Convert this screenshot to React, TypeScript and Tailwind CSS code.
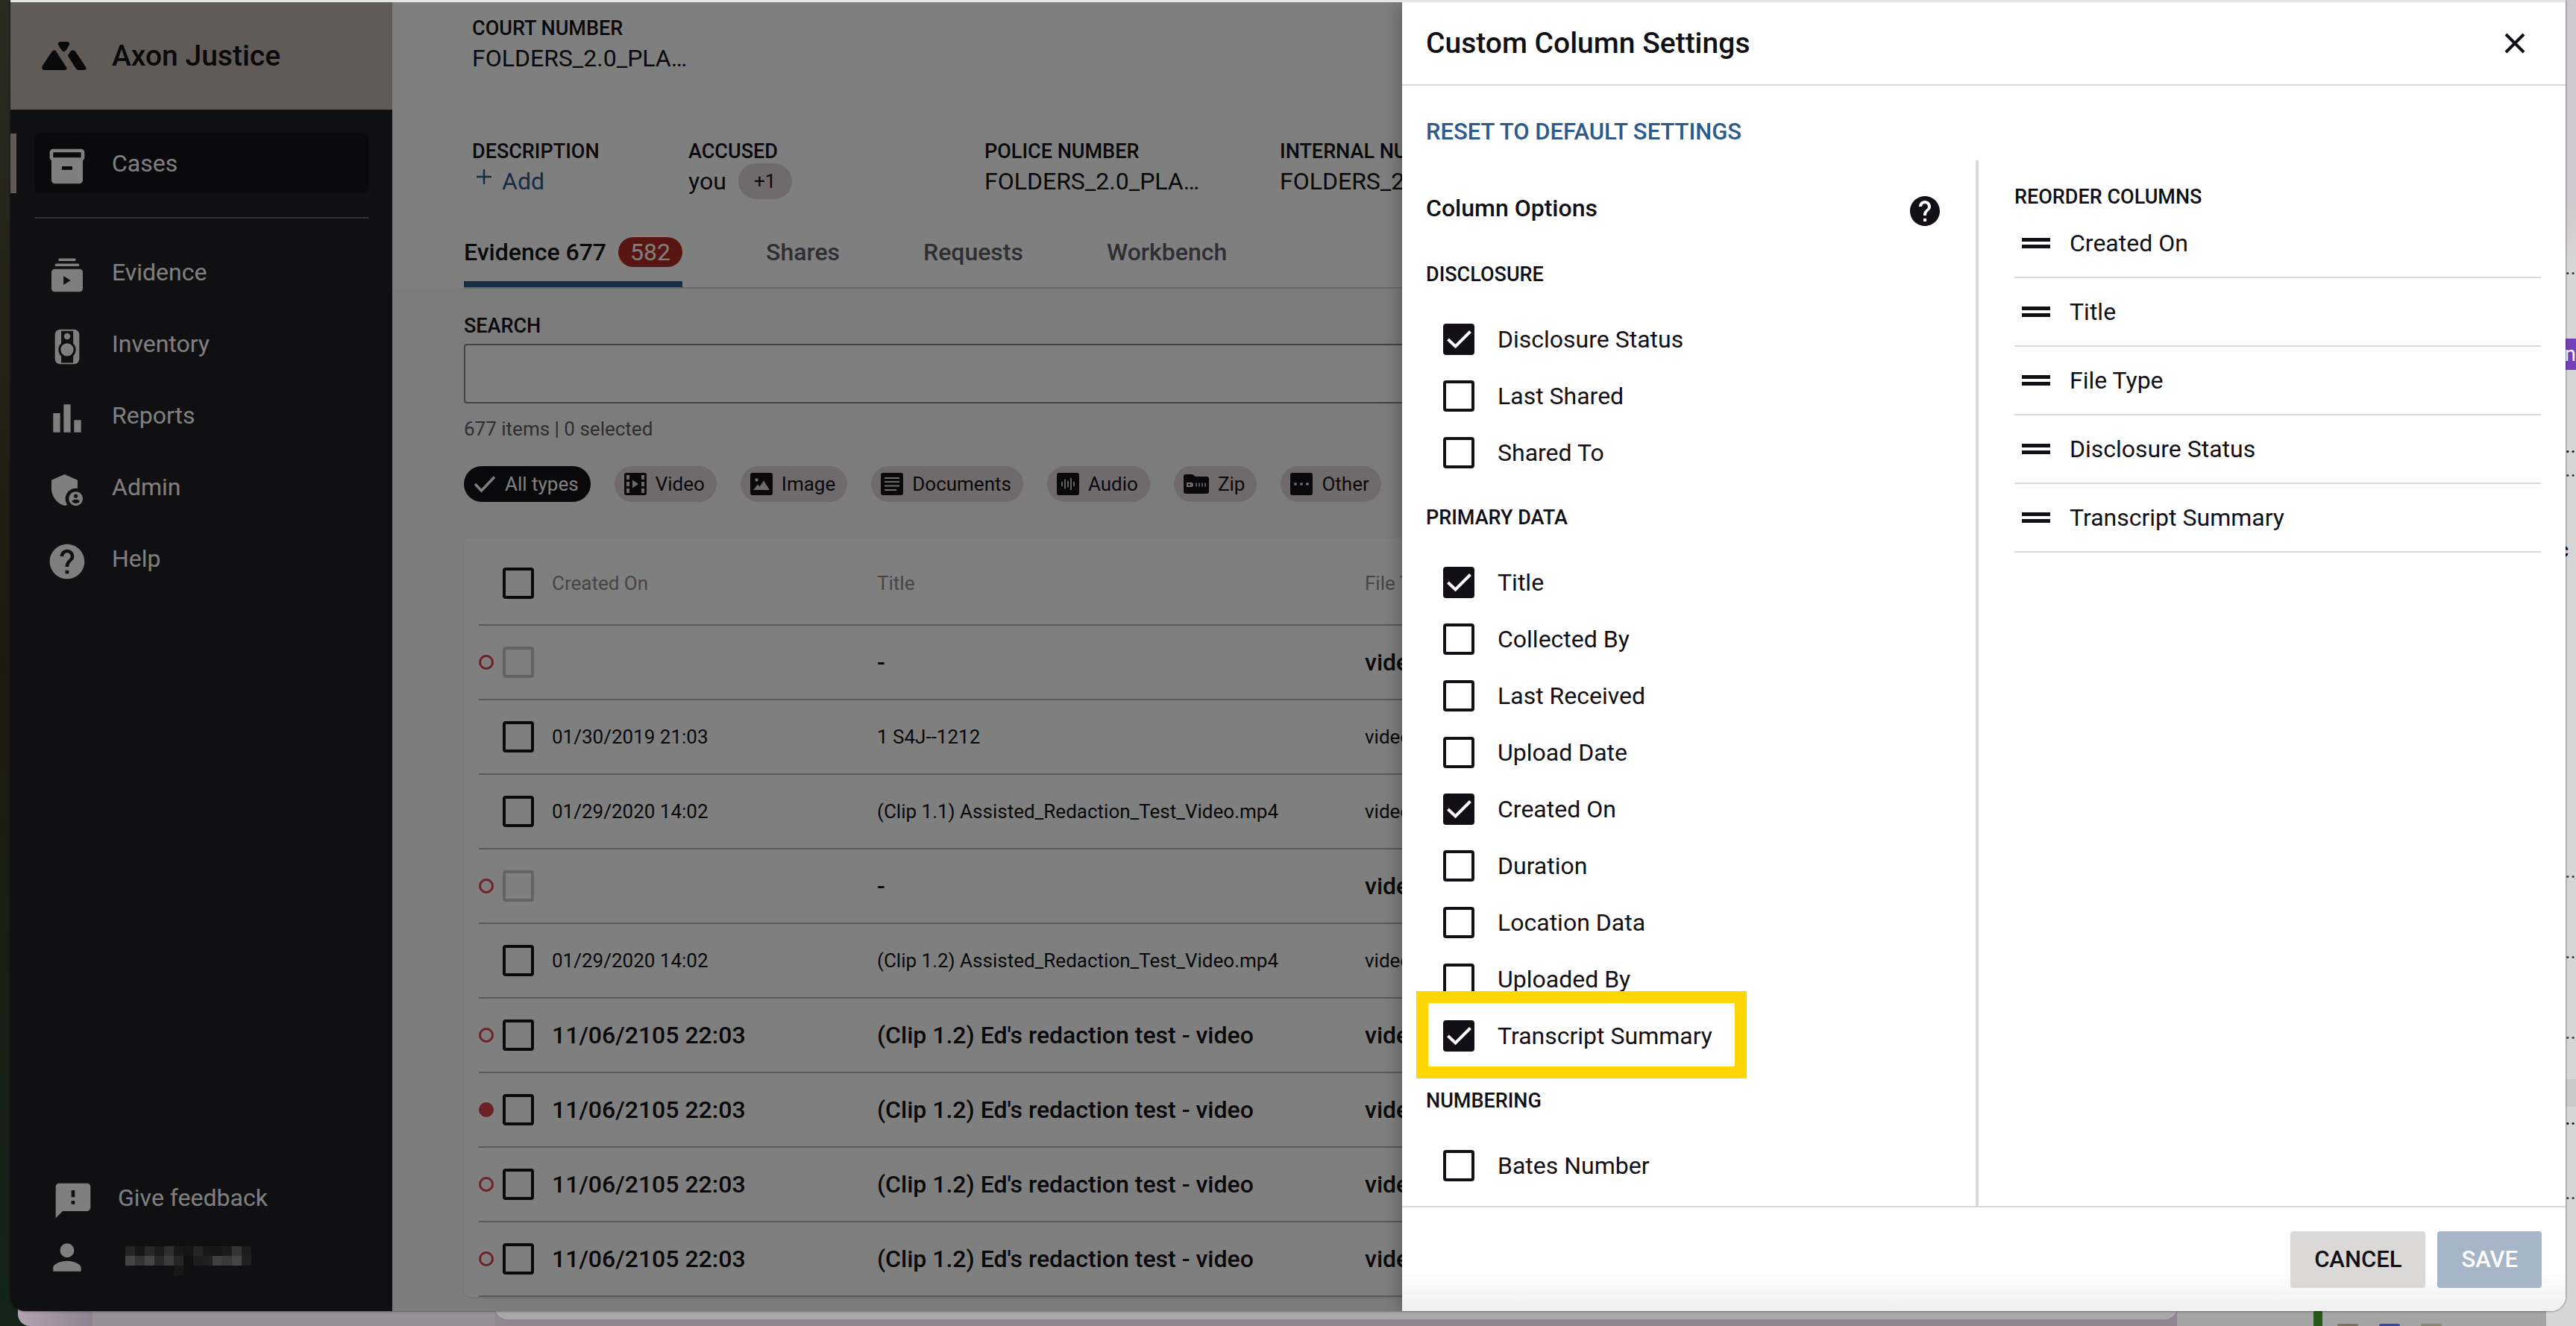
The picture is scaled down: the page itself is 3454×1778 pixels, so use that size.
import { useState } from "react";
import type { ReactNode } from "react";
import { MdAdminPanelSettings, MdBarChart, MdFeedback, MdHelp, MdInventory2, MdPerson } from "react-icons/md";

interface NavItem {
    label: string;
    icon: ReactNode;
}

interface EvidenceRow {
    marker?: "open" | "filled";
    createdOn: string;
    title: string;
    bold: boolean;
    disabled?: boolean;
}

const BodyCamIcon = () => (
    <svg viewBox="0 0 24 24" className="h-14 w-14" aria-hidden="true">
        <rect x="5" y="2" width="14" height="20" rx="3" fill="currentColor" />
        <rect x="8.6" y="2.9" width="6.9" height="18.3" fill="#202024" />
        <circle cx="12" cy="13.7" r="5" fill="#202024" />
        <circle cx="12" cy="13.7" r="3.7" fill="currentColor" />
        <circle cx="12" cy="6" r="1.8" fill="currentColor" />
    </svg>
);

const EvidenceIcon = () => (
    <svg viewBox="0 0 24 24" className="h-14 w-14" fill="currentColor" aria-hidden="true">
        <rect x="7" y="2.4" width="10" height="1.5" rx="0.7" />
        <rect x="5" y="5.4" width="14" height="1.5" rx="0.7" />
        <rect x="3" y="8.5" width="18" height="13" rx="1.8" />
        <path d="M9.9 12.4v5.2l4.1-2.6z" fill="#202024" />
    </svg>
);

const Logo = () => (
    <svg viewBox="0 0 60 38" className="h-[38px] w-[60px]" fill="currentColor" aria-hidden="true">
        <path d="M22 3.500C21.500 1.500 23 0 25 0H34C36 0 37.500 1.500 37 3.500C36.500 5 33 11 31.500 12.500C30.500 13.500 29 13.500 28 12.500C26.500 11 22.500 5.500 22 3.500Z" />
        <path d="M14 13C15.500 11 18 11 19.500 13C23 19 31 31 33 34C34.500 36.500 33 38 30 38H4C1 38 -.5 36 .5 33.500C2 30 10.500 17.500 14 13Z" />
        <path d="M38.500 13C40 11 43.500 11 45 13C49 18.500 56.500 30 59 34C60.500 36.500 59 38 56 38H50C48 38 47 37.500 46 36C43 31.500 38.500 24.500 36 20.500C35 19 35 18 36 16.500Z" />
    </svg>
);

const navItems: NavItem[] = [
    { label: "Evidence", icon: <EvidenceIcon /> },
    { label: "Inventory", icon: <BodyCamIcon /> },
    { label: "Reports", icon: <MdBarChart className="h-14 w-14" /> },
    { label: "Admin", icon: <MdAdminPanelSettings className="h-14 w-14" /> },
    { label: "Help", icon: <MdHelp className="h-14 w-14" /> },
];

const chips: { label: string; icon: ReactNode }[] = [
    {
        label: "Video",
        icon: (
            <svg viewBox="0 0 30 30" className="h-[30px] w-[30px]" aria-hidden="true">
                <rect width="30" height="30" rx="3" fill="#121015" />
                <g fill="#ded5d8">
                    <rect x="3" y="3" width="4" height="6" />
                    <rect x="3" y="12" width="4" height="6" />
                    <rect x="3" y="21" width="4" height="6" />
                    <rect x="23" y="3" width="4" height="6" />
                    <rect x="23" y="12" width="4" height="6" />
                    <rect x="23" y="21" width="4" height="6" />
                    <path d="M11 9.500v11l8-5.500z" />
                </g>
            </svg>
        ),
    },
    {
        label: "Image",
        icon: (
            <svg viewBox="0 0 30 30" className="h-[30px] w-[30px]" aria-hidden="true">
                <rect width="30" height="30" rx="3" fill="#121015" />
                <circle cx="8.500" cy="9.500" r="2.200" fill="#ded5d8" />
                <path d="M4 23l6-7.500 2.500 3 5.500-8L26 23z" fill="#ded5d8" />
            </svg>
        ),
    },
    {
        label: "Documents",
        icon: (
            <svg viewBox="0 0 30 30" className="h-[30px] w-[30px]" aria-hidden="true">
                <rect width="30" height="30" rx="3" fill="#121015" />
                <path d="M5 7h20M5 12h20M5 17.500h20M5 23h16" stroke="#ded5d8" strokeWidth="2.200" />
            </svg>
        ),
    },
    {
        label: "Audio",
        icon: (
            <svg viewBox="0 0 30 30" className="h-[30px] w-[30px]" aria-hidden="true">
                <rect width="30" height="30" rx="3" fill="#121015" />
                <path d="M7 12.500v5M11 9.500v11M15 11.500v7M19 7.500v15M23 12.500v5" stroke="#ded5d8" strokeWidth="1.800" strokeLinecap="round" />
            </svg>
        ),
    },
    {
        label: "Zip",
        icon: (
            <svg viewBox="0 0 34 30" className="h-[30px] w-[34px]" aria-hidden="true">
                <path d="M3 2h9l4 3h15a3 3 0 0 1 3 3v17a3 3 0 0 1-3 3H3a3 3 0 0 1-3-3V5a3 3 0 0 1 3-3z" fill="#121015" />
                <path d="M4 13h7l2 1.500v3L11 19H4z" fill="#ded5d8" />
                <rect x="6" y="15" width="3" height="2" fill="#121015" />
                <path d="M17 13.500v5M21 13.500v5M25 13.500v5M29 13.500v5" stroke="#ded5d8" strokeWidth="1.600" />
            </svg>
        ),
    },
    {
        label: "Other",
        icon: (
            <svg viewBox="0 0 30 30" className="h-[30px] w-[30px]" aria-hidden="true">
                <rect width="30" height="30" rx="3" fill="#121015" />
                <circle cx="7" cy="15" r="2" fill="#ded5d8" />
                <circle cx="15" cy="15" r="2" fill="#ded5d8" />
                <circle cx="23" cy="15" r="2" fill="#ded5d8" />
            </svg>
        ),
    },
];

const rows: EvidenceRow[] = [
    { marker: "open", createdOn: "", title: "-", bold: true, disabled: true },
    { createdOn: "01/30/2019 21:03", title: "1 S4J--1212", bold: false },
    { createdOn: "01/29/2020 14:02", title: "(Clip 1.1) Assisted_Redaction_Test_Video.mp4", bold: false },
    { marker: "open", createdOn: "", title: "-", bold: true, disabled: true },
    { createdOn: "01/29/2020 14:02", title: "(Clip 1.2) Assisted_Redaction_Test_Video.mp4", bold: false },
    { marker: "open", createdOn: "11/06/2105 22:03", title: "(Clip 1.2) Ed's redaction test - video", bold: true },
    { marker: "filled", createdOn: "11/06/2105 22:03", title: "(Clip 1.2) Ed's redaction test - video", bold: true },
    { marker: "open", createdOn: "11/06/2105 22:03", title: "(Clip 1.2) Ed's redaction test - video", bold: true },
    { marker: "open", createdOn: "11/06/2105 22:03", title: "(Clip 1.2) Ed's redaction test - video", bold: true },
];

const columnGroups = [
    { name: "DISCLOSURE", options: ["Disclosure Status", "Last Shared", "Shared To"] },
    {
        name: "PRIMARY DATA",
        options: ["Title", "Collected By", "Last Received", "Upload Date", "Created On", "Duration", "Location Data", "Uploaded By", "Transcript Summary"],
    },
    { name: "NUMBERING", options: ["Bates Number"] },
];

const columnOrder = ["Created On", "Title", "File Type", "Disclosure Status", "Transcript Summary"];

// brightness of each block of the hidden user name
const maskedName = [
    ["#4a4a4c", "#2e2e30", "#4e4e50", "#38383a", "#5c5c5e", "#303032", "#2a2a2c", "#4a4a4c", "#303032", "#2e2e30", "#363638", "#6a6a6c", "#3a3a3c"],
    ["#88888a", "#66666a", "#88888a", "#505052", "#78787a", "#4a4a4c", "#202024", "#3a3a3c", "#404042", "#7e7e80", "#707074", "#8a8a8c", "#404042"],
    ["#202024", "#202024", "#202024", "#202024", "#202024", "#303032", "#202024", "#202024", "#202024", "#202024", "#202024", "#202024", "#202024"],
];

const Checkbox = ({ id, label, checked, disabled, onChange }: { id: string; label?: string; checked?: boolean; disabled?: boolean; onChange?: () => void }) => (
    <span className="grid h-[42px] w-[42px] shrink-0">
        <input
            id={id}
            type="checkbox"
            aria-label={label}
            checked={checked ?? false}
            disabled={disabled}
            onChange={() => onChange?.()}
            className="peer col-start-1 row-start-1 h-[42px] w-[42px] appearance-none rounded-sm border-4 border-[#121015] checked:bg-[#121015] disabled:border-[#c9c9cd]"
        />
        <svg viewBox="0 0 42 42" className="pointer-events-none invisible col-start-1 row-start-1 h-[42px] w-[42px] peer-checked:visible" fill="none" stroke="#fff" strokeWidth="4" aria-hidden="true">
            <path d="M6.500 21l10 9.500L36.500 10.500" />
        </svg>
    </span>
);

const Sidebar = () => (
    <nav className="flex w-[512px] shrink-0 flex-col bg-[#202024] text-[32px] leading-10 text-white">
        <div className="flex h-36 items-center gap-[34px] bg-[#c0b6b0] pl-[42px] text-[#121015]">
            <Logo />
            <span className="text-[39px] font-medium">Axon Justice</span>
        </div>
        <div className="mt-8 flex border-l-8 border-[#c0b6b0] pr-8 pl-6">
            <a href="#cases" className="flex h-20 flex-1 items-center gap-8 rounded-lg bg-[#141418] px-4">
                <MdInventory2 className="mt-2 h-14 w-14" />
                Cases
            </a>
        </div>
        <hr className="mx-8 mt-8 border-t-2 border-[#68686c]" />
        <ul className="mx-8 mt-8 flex flex-col gap-4">
            {navItems.map((item) => (
                <li key={item.label}>
                    <a href={"#" + item.label.toLowerCase()} className="flex h-20 items-center gap-8 px-4">
                        <span className="mt-2">{item.icon}</span>
                        {item.label}
                    </a>
                </li>
            ))}
        </ul>
        <div className="mt-auto pb-8">
            <a href="#feedback" className="flex h-20 items-center gap-8 pl-14">
                <MdFeedback className="mt-2 h-14 w-14" />
                Give feedback
            </a>
            <div className="flex h-20 items-center gap-[50px] pl-12">
                <MdPerson className="h-14 w-14" />
                <div className="mt-2 grid grid-cols-13" role="img" aria-label="User name hidden">
                    {maskedName.flat().map((color, index) => (
                        <span key={index} className="h-[13px] w-[13px]" style={{ backgroundColor: color }} />
                    ))}
                </div>
            </div>
        </div>
    </nav>
);

const Field = ({ label, children }: { label: string; children: ReactNode }) => (
    <div>
        <dt className="text-[27px] leading-8 font-medium">{label}</dt>
        <dd className="flex h-12 items-center text-[32px]">{children}</dd>
    </div>
);

const CaseHeader = () => (
    <header className="bg-white pl-24">
        <dl className="pt-[19px] pl-[11px]">
            <Field label="COURT NUMBER">FOLDERS_2.0_PLA…</Field>
            <div className="mt-[85px] grid grid-cols-[290px_397px_396px_1fr] whitespace-nowrap">
                <Field label="DESCRIPTION">
                    <button type="button" className="flex items-center gap-3 pl-1 text-[#2c5a8c]">
                        <svg viewBox="0 0 24 24" className="mb-3 h-6 w-6" stroke="currentColor" strokeWidth="2.500" aria-hidden="true">
                            <path d="M2 12h20M12 2v20" />
                        </svg>
                        Add
                    </button>
                </Field>
                <Field label="ACCUSED">
                    you
                    <span className="ml-4 flex h-12 w-[72px] items-center justify-center rounded-full bg-[#ded5d8] text-[26px]">+1</span>
                </Field>
                <Field label="POLICE NUMBER">FOLDERS_2.0_PLA…</Field>
                <Field label="INTERNAL NUMBER">FOLDERS_2.0_PLA…</Field>
            </div>
        </dl>
        <div role="tablist" className="mt-8 flex items-start gap-28 border-b-2 border-[#d6cfd1] text-[32px] font-medium text-[#5f5c64]">
            <button type="button" role="tab" aria-selected="true" className="flex h-[86px] items-center gap-4 border-b-8 border-[#2c5a8c] text-[#121015]">
                Evidence 677
                <span className="flex h-10 items-center rounded-full bg-[#b02a24] px-4 font-normal text-white">582</span>
            </button>
            <button type="button" role="tab" className="h-[78px]">Shares</button>
            <button type="button" role="tab" className="h-[78px]">Requests</button>
            <button type="button" role="tab" className="h-[78px]">Workbench</button>
        </div>
    </header>
);

const EvidenceTable = () => (
    <div className="mt-12 rounded-lg bg-white pl-5 shadow">
        <table className="w-full table-fixed border-separate border-spacing-0 text-left">
            <colgroup>
                <col className="w-8" />
                <col className="w-[66px]" />
                <col className="w-[436px]" />
                <col className="w-[654px]" />
                <col />
            </colgroup>
            <thead>
                <tr className="text-[26px] text-[#8c8a90] *:h-[118px] *:border-b-2 *:border-[#bdb3b3] *:pt-1.5 *:font-normal">
                    <td />
                    <td><Checkbox id="select-all" label="Select all" /></td>
                    <th>Created On</th>
                    <th>Title</th>
                    <th>File Type</th>
                </tr>
            </thead>
            <tbody>
                {rows.map((row, index) => (
                    <tr key={index} className={"whitespace-nowrap *:h-[100px] *:border-b-2 *:border-[#bdb3b3] " + (row.bold ? "text-[32px] font-medium" : "text-[26px]")}>
                        <td>
                            {row.marker && <span className={"block h-5 w-5 rounded-full border-3 border-[#d8434b] " + (row.marker === "filled" ? "bg-[#d8434b]" : "")} />}
                        </td>
                        <td><Checkbox id={"row-" + index} label={"Select " + row.title} disabled={row.disabled} /></td>
                        <td>{row.createdOn}</td>
                        <td>{row.title}</td>
                        <td>video</td>
                    </tr>
                ))}
            </tbody>
        </table>
    </div>
);

const EvidencePage = () => (
    <main className="min-w-0 flex-1 bg-[#f9f9f9]">
        <CaseHeader />
        <section className="pt-[34px] pl-24">
            <label htmlFor="search" className="block text-[27px] leading-8 font-medium">SEARCH</label>
            <input id="search" type="search" className="mt-2 block h-20 w-full rounded-sm border-2 border-[#868488] bg-white px-4 text-[32px]" />
            <p className="mt-[18px] text-[26px] leading-8 text-[#5f5c64]">677 items | 0 selected</p>
            <div className="mt-[34px] flex gap-8 text-[26px]">
                <button type="button" className="flex h-12 items-center gap-3 rounded-full bg-[#121015] pr-4 pl-[13px] text-white">
                    <svg viewBox="0 0 30 24" className="h-6 w-[30px]" fill="none" stroke="currentColor" strokeWidth="3.500" aria-hidden="true">
                        <path d="M2 12l8.500 9L28 2.500" />
                    </svg>
                    All types
                </button>
                {chips.map((chip) => (
                    <button key={chip.label} type="button" className="flex h-12 items-center gap-3 rounded-full bg-[#ded5d8] pr-4 pl-[13px]">
                        {chip.icon}
                        {chip.label}
                    </button>
                ))}
            </div>
            <EvidenceTable />
        </section>
    </main>
);

const ColumnSettings = () => {
    const [selected, setSelected] = useState<string[]>(["Disclosure Status", "Title", "Created On", "Transcript Summary"]);

    const toggleColumn = (name: string) => {
        setSelected(selected.includes(name) ? selected.filter((item) => item !== name) : [...selected, name]);
    };

    return (
        <aside role="dialog" aria-label="Custom Column Settings" className="absolute inset-y-0 right-0 flex w-[1560px] max-w-full flex-col bg-white text-[32px] leading-10 shadow-[0_0_24px_rgba(0,0,0,0.35)]">
            <div className="flex h-28 items-center justify-between border-b-2 border-[#d9d9d9] pr-[54px] pl-8">
                <h2 className="text-[39px] font-medium">Custom Column Settings</h2>
                <button type="button" aria-label="Close">
                    <svg viewBox="0 0 28 28" className="h-7 w-7" stroke="currentColor" strokeWidth="4" aria-hidden="true">
                        <path d="M2 2l24 24M26 2L2 26" />
                    </svg>
                </button>
            </div>
            <div className="flex h-[100px] items-center pt-6 pl-8">
                <button type="button" className="text-[31px] font-medium text-[#2c5a8c]">RESET TO DEFAULT SETTINGS</button>
            </div>
            <div className="flex flex-1">
                <div className="w-[773px] shrink-0 border-r-4 border-[#d9d9d9] pl-8">
                    <div className="flex h-[104px] items-center justify-between pt-6 pr-11">
                        <h3 className="font-medium">Column Options</h3>
                        <button type="button" aria-label="Help" className="mt-2">
                            <MdHelp className="h-12 w-12" />
                        </button>
                    </div>
                    {columnGroups.map((group) => (
                        <fieldset key={group.name}>
                            <legend className="flex h-[98px] items-center text-[27px] font-medium">{group.name}</legend>
                            {group.options.map((option) => (
                                <div key={option} className="relative flex h-[76px] items-center gap-[31px] pl-[23px]">
                                    <Checkbox id={option} checked={selected.includes(option)} onChange={() => toggleColumn(option)} />
                                    <label htmlFor={option}>{option}</label>
                                    {option === "Transcript Summary" && (
                                        <span className="pointer-events-none absolute -top-[22px] -left-[13px] h-[117px] w-[443px] border-16 border-[#ffd600]" />
                                    )}
                                </div>
                            ))}
                        </fieldset>
                    ))}
                </div>
                <div className="flex-1 pr-[33px] pl-12">
                    <h3 className="flex h-[66px] items-center pt-8 text-[27px] font-medium">REORDER COLUMNS</h3>
                    <ul>
                        {columnOrder.map((column) => (
                            <li key={column} className="flex h-[92px] items-center gap-[26px] border-b-2 border-[#d9d9d9] pl-[10px]">
                                <svg viewBox="0 0 38 14" className="h-[14px] w-[38px] cursor-grab" fill="#121015" aria-hidden="true">
                                    <rect width="38" height="5" />
                                    <rect y="9" width="38" height="5" />
                                </svg>
                                {column}
                            </li>
                        ))}
                    </ul>
                </div>
            </div>
            <div className="flex h-[141px] items-start justify-end gap-4 border-t-2 border-[#d9d9d9] bg-linear-to-b from-white from-60% to-[#f0f0f0] pt-8 pr-8 text-[31px] font-medium">
                <button type="button" className="h-[76px] rounded-sm bg-[#dad9d8] px-8">CANCEL</button>
                <button type="button" className="h-[76px] rounded-sm bg-[#a6b5c7] px-8 text-white">SAVE</button>
            </div>
        </aside>
    );
};

// slivers of the other windows that show around the browser
const Desktop = () => (
    <div className="absolute inset-0 overflow-hidden bg-linear-to-b from-[#2a2c20] via-[#1c1a10] to-[#14241b]" aria-hidden="true">
        <div className="absolute right-0 bottom-0 left-6 flex h-10 items-end">
            <div className="h-full w-[100px] rounded-bl-2xl bg-linear-to-r from-[#b3a3b2] to-[#8e8290]" />
            <div className="h-full w-[540px] bg-[#988e96]" />
            <div className="h-full flex-1 bg-[#928690] pb-[9px]">
                <div className="h-full rounded-b-2xl bg-[#a9a9a9]" />
            </div>
            <div className="flex h-full w-[535px] bg-[#a4a4a4] pl-[183px]">
                <div className="h-full w-3 bg-[#275a1a]" />
                <div className="flex h-full items-end gap-7">
                    <span className="ml-5 h-[3px] w-7 rounded-t-full bg-[#7b7260]" />
                    <span className="h-[3px] w-7 rounded-t-full bg-[#3b48a8]" />
                    <span className="h-[3px] w-7 rounded-t-full bg-[#8b8574]" />
                </div>
            </div>
        </div>
        <div className="absolute inset-y-0 right-0 w-10 bg-linear-to-b from-[#cfc8cc] from-15% to-[#d6d6d6] to-20% text-[28px] leading-none text-[#333]">
            <span className="absolute top-[345px] right-0">...</span>
            <span className="absolute top-[454px] right-0 flex h-[42px] w-10 items-center justify-end bg-[#7442b8] text-white">in</span>
            <span className="absolute top-[584px] right-0 text-black">...</span>
            <span className="absolute top-[616px] right-0">...</span>
            <span className="absolute top-[724px] right-2.5 font-medium text-black">c</span>
            <span className="absolute top-[1154px] right-0">..</span>
            <span className="absolute top-[1262px] right-0">..</span>
            <span className="absolute top-[1370px] right-0">...</span>
            <span className="absolute top-[1447px] right-0 h-[37px] w-10 bg-[#c9c9c9]" />
            <span className="absolute top-[1485px] right-0 text-black">...</span>
            <span className="absolute top-[1585px] right-0">...</span>
        </div>
    </div>
);

const App = () => {
    return (
        <div className="relative flex h-screen flex-col overflow-hidden font-[Roboto,sans-serif] text-[#121015]">
            <Desktop />
            <div className="relative mx-[14px] mb-5 flex min-h-0 flex-1 overflow-hidden rounded-b-[20px] border-t-3 border-[#e5e5e5] shadow-[0_0_3px_rgba(0,0,0,0.7)]">
                <Sidebar />
                <EvidencePage />
                <div className="absolute inset-0 bg-black/50" />
                <ColumnSettings />
            </div>
        </div>
    );
};

export default App;
